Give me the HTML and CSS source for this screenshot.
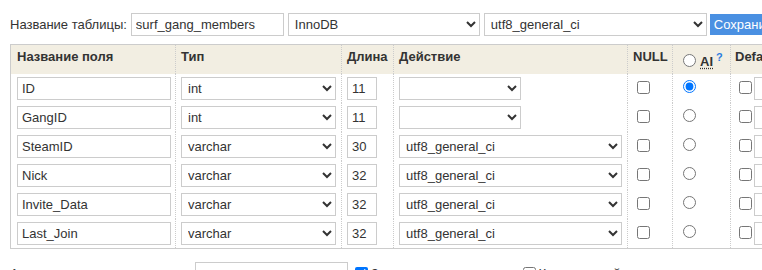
FILE: index.html
```html
<!DOCTYPE html>
<html lang="ru">
<head>
<meta charset="utf-8">
<title>Изменить таблицу</title>
<link rel="stylesheet" href="styles.css">
</head>
<body>
<form class="page">
  <div class="head">
    <label class="head-label" for="tname">Название таблицы:</label>
    <input id="tname" class="txt w-name" type="text" value="surf_gang_members">
    <select class="sel w-engine"><option>InnoDB</option></select>
    <select class="sel w-coll"><option>utf8_general_ci</option></select>
    <button type="button" class="btn">Сохранить</button>
  </div>

  <div class="fields">
    <div class="th c1">Название поля</div>
    <div class="th c2">Тип</div>
    <div class="th c3">Длина</div>
    <div class="th c4">Действие</div>
    <div class="th c5">NULL</div>
    <div class="th c6 th-ai"><input type="radio" name="ai" class="rad-h"><abbr title="Auto Increment" class="ai">AI</abbr><span class="q">?</span></div>
    <div class="th c7">Default</div>

    <div class="td c1"><input class="txt w-field" type="text" value="ID"></div>
    <div class="td c2"><select class="sel w-type"><option>int</option></select></div>
    <div class="td c3"><input class="txt w-len" type="text" value="11"></div>
    <div class="td c4"><select class="sel w-act"><option></option></select></div>
    <div class="td c5"><input type="checkbox" class="chk"></div>
    <div class="td c6"><input type="radio" name="ai" class="rad" checked></div>
    <div class="td c7"><input type="checkbox" class="chk"><input class="txt w-def" type="text"></div>

    <div class="td c1"><input class="txt w-field" type="text" value="GangID"></div>
    <div class="td c2"><select class="sel w-type"><option>int</option></select></div>
    <div class="td c3"><input class="txt w-len" type="text" value="11"></div>
    <div class="td c4"><select class="sel w-act"><option></option></select></div>
    <div class="td c5"><input type="checkbox" class="chk"></div>
    <div class="td c6"><input type="radio" name="ai" class="rad"></div>
    <div class="td c7"><input type="checkbox" class="chk"><input class="txt w-def" type="text"></div>

    <div class="td c1"><input class="txt w-field" type="text" value="SteamID"></div>
    <div class="td c2"><select class="sel w-type"><option>varchar</option></select></div>
    <div class="td c3"><input class="txt w-len" type="text" value="30"></div>
    <div class="td c4"><select class="sel w-coll2"><option>utf8_general_ci</option></select></div>
    <div class="td c5"><input type="checkbox" class="chk"></div>
    <div class="td c6"><input type="radio" name="ai" class="rad"></div>
    <div class="td c7"><input type="checkbox" class="chk"><input class="txt w-def" type="text"></div>

    <div class="td c1"><input class="txt w-field" type="text" value="Nick"></div>
    <div class="td c2"><select class="sel w-type"><option>varchar</option></select></div>
    <div class="td c3"><input class="txt w-len" type="text" value="32"></div>
    <div class="td c4"><select class="sel w-coll2"><option>utf8_general_ci</option></select></div>
    <div class="td c5"><input type="checkbox" class="chk"></div>
    <div class="td c6"><input type="radio" name="ai" class="rad"></div>
    <div class="td c7"><input type="checkbox" class="chk"><input class="txt w-def" type="text"></div>

    <div class="td c1"><input class="txt w-field" type="text" value="Invite_Data"></div>
    <div class="td c2"><select class="sel w-type"><option>varchar</option></select></div>
    <div class="td c3"><input class="txt w-len" type="text" value="32"></div>
    <div class="td c4"><select class="sel w-coll2"><option>utf8_general_ci</option></select></div>
    <div class="td c5"><input type="checkbox" class="chk"></div>
    <div class="td c6"><input type="radio" name="ai" class="rad"></div>
    <div class="td c7"><input type="checkbox" class="chk"><input class="txt w-def" type="text"></div>

    <div class="td c1"><input class="txt w-field" type="text" value="Last_Join"></div>
    <div class="td c2"><select class="sel w-type"><option>varchar</option></select></div>
    <div class="td c3"><input class="txt w-len" type="text" value="32"></div>
    <div class="td c4"><select class="sel w-coll2"><option>utf8_general_ci</option></select></div>
    <div class="td c5"><input type="checkbox" class="chk"></div>
    <div class="td c6"><input type="radio" name="ai" class="rad"></div>
    <div class="td c7"><input type="checkbox" class="chk"><input class="txt w-def" type="text"></div>
  </div>

  <div class="foot">
    <label class="foot-label" for="autoinc">Автоматическое приращение:</label>
    <input id="autoinc" class="txt w-auto" type="text">
    <label class="opt"><input type="checkbox" class="chk-f" checked>Значения по умолчанию</label>
    <label class="opt opt2"><input type="checkbox" class="chk-f">Комментарий</label>
  </div>
</form>
</body>
</html>
```

FILE: styles.css
```css
html, body {
  margin: 0;
  padding: 0;
  overflow: hidden;
  background: #fff;
}

body {
  font-family: "Liberation Sans", Arial, sans-serif;
  font-size: 13px;
  color: #333;
}

.page {
  margin: 0;
}

.head {
  display: flex;
  align-items: center;
  gap: 4px;
  padding: 13px 0 0 10px;
  white-space: nowrap;
}

.txt,
.sel {
  box-sizing: border-box;
  height: 23px;
  margin: 0;
  font-family: "Liberation Sans", Arial, sans-serif;
  font-size: 13px;
  color: #333;
  background: #fff;
  border: 1px solid #ccc;
  border-radius: 0;
  flex: none;
}

.txt {
  padding: 0 4px;
}

.sel {
  padding: 0 2px;
}

.w-name { width: 153px; }
.w-engine { width: 192px; }
.w-coll { width: 223px; }

.btn {
  flex: none;
  height: 21px;
  margin: 0 0 0 -1px;
  padding: 0 4px;
  border: 0;
  background: #4a90e2;
  color: #fff;
  font-family: "Liberation Sans", Arial, sans-serif;
  font-size: 13px;
}

.fields {
  display: grid;
  grid-template-columns: 164px 166px 52px 234px 45px 58px 160px;
  grid-auto-rows: 29px;
  width: max-content;
  margin: 8px 0 0 10px;
  border: 1px solid #ccc;
}

.th,
.td {
  box-sizing: border-box;
  padding: 0 5px;
  border-left: 1px dotted #ccc;
  white-space: nowrap;
}

.c1 {
  border-left: 0;
  padding-left: 6px;
}

.th {
  background: #f2eee2;
  font-weight: bold;
  line-height: 15px;
  padding-top: 4px;
}

.c7.th {
  padding-left: 4px;
}

.td {
  display: flex;
  align-items: flex-start;
  padding-top: 3px;
}

.th-ai {
  display: flex;
  align-items: flex-start;
  padding-top: 0;
  font-weight: normal;
}

.rad-h {
  display: block;
  margin: 9px 3px 0 5px;
}

.ai {
  display: block;
  margin: 9px 0 0 1px;
  font-weight: bold;
  line-height: 15px;
  text-decoration: underline dotted;
  text-underline-offset: 2px;
}

.q {
  display: block;
  margin: 7px 0 0 3px;
  font-size: 11px;
  line-height: 11px;
  font-weight: bold;
  color: #2b7de0;
}

.w-field { width: 154px; }
.w-type { width: 155px; }
.w-len { width: 30px; }
.w-act { width: 122px; }
.w-coll2 { width: 223px; }
.w-def { width: 120px; }

.chk {
  display: block;
  flex: none;
  margin: 4px 3px 3px 4px;
}

.c7 .chk {
  margin-left: 3px;
  margin-right: 2px;
}

.rad {
  display: block;
  flex: none;
  margin: 3px 3px 0 5px;
}

.foot {
  display: flex;
  align-items: center;
  gap: 3px;
  margin: 13px 0 0 10px;
  white-space: nowrap;
}

.foot-label {
  margin-right: 1px;
}

.w-auto { width: 153px; }

.opt {
  display: flex;
  align-items: center;
}

.opt2 {
  margin-left: -2px;
}

.chk-f {
  margin: 3px 3px 3px 4px;
}
```
